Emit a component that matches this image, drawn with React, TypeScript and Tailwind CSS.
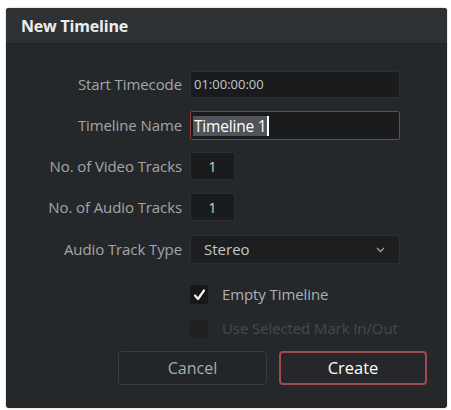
import React from 'react';

const font = { fontFamily: '"Open Sans", "Noto Sans", sans-serif' };

const Row = ({ label, children, className = '' }: { label: string; children: React.ReactNode; className?: string }) => (
  <div className={`flex items-center ${className}`}>
    <div className="w-[177px] pr-[1px] text-right text-[15px] tracking-[-0.1px] text-[#a3a5a8] whitespace-nowrap">{label}</div>
    <div className="ml-[7px] flex items-center">{children}</div>
  </div>
);

const App = () => {
  return (
    <div className="w-[451px] h-[410px] bg-white pt-[8px] pl-[6px]" style={font}>
      <div className="w-[441px] h-[400px] rounded-[3px] bg-[#25282b] overflow-hidden flex flex-col shadow-[0_0_2px_rgba(0,0,0,0.3)]">
        {/* Title bar */}
        <div className="h-[36px] bg-[#2f3235] border-b border-[#1e2023] flex items-center pl-[15px]">
          <span className="text-[16px] font-bold text-[#eceded] tracking-[-0.2px]">New Timeline</span>
        </div>

        {/* Form */}
        <div className="flex flex-col pt-[27px]">
          <Row label="Start Timecode">
            <div className="w-[210px] h-[27px] bg-[#1a1b1d] border border-[#2c2e31] rounded-[2px] flex items-center pl-[3px] text-[13px] text-[#c4c6c8]">
              01:00:00:00
            </div>
          </Row>
          <Row label="Timeline Name" className="mt-[13px]">
            <div className="w-[210px] h-[29px] bg-[#1a1b1d] border border-[#8e3a3e] rounded-[2px] flex items-center pl-[2px] text-[15.5px]">
              <span className="bg-[#505357] text-white px-[1px] leading-[20px] tracking-[-0.2px]">Timeline 1</span>
              <span className="w-[1.5px] h-[20px] bg-white"></span>
            </div>
          </Row>
          <Row label="No. of Video Tracks" className="mt-[12px]">
            <div className="w-[45px] h-[28px] bg-[#1a1b1d] border border-[#2c2e31] rounded-[2px] flex items-center justify-center text-[14px] text-[#d6d8da]">
              1
            </div>
          </Row>
          <Row label="No. of Audio Tracks" className="mt-[13px]">
            <div className="w-[45px] h-[28px] bg-[#1a1b1d] border border-[#2c2e31] rounded-[2px] flex items-center justify-center text-[14px] text-[#d6d8da]">
              1
            </div>
          </Row>
          <Row label="Audio Track Type" className="mt-[14px]">
            <div className="w-[210px] h-[29px] bg-[#1d1e20] border border-[#2c2e31] rounded-[2px] flex items-center justify-between pl-[13px] pr-[14px] text-[15px] text-[#c4c6c8]">
              <span>Stereo</span>
              <svg width="9" height="6" viewBox="0 0 9 6" fill="none">
                <path d="M1 1l3.5 3.5L8 1" stroke="#9a9c9f" strokeWidth="1.3" />
              </svg>
            </div>
          </Row>

          {/* Checkboxes */}
          <div className="flex items-center ml-[184px] mt-[21px]">
            <div className="w-[18px] h-[19px] bg-[#17181a] rounded-[2px] flex items-center justify-center">
              <svg width="13" height="12" viewBox="0 0 13 12" fill="none">
                <path d="M2 6.5l3 3.5L11 1.5" stroke="#f2f2f2" strokeWidth="2.2" strokeLinecap="round" strokeLinejoin="round" />
              </svg>
            </div>
            <span className="ml-[14px] text-[15px] leading-[19px] tracking-[-0.1px] text-[#aeb0b3]">Empty Timeline</span>
          </div>
          <div className="flex items-center ml-[184px] mt-[15px]">
            <div className="w-[18px] h-[18px] bg-[#1f2022] rounded-[2px]"></div>
            <span className="ml-[14px] text-[15px] leading-[19px] tracking-[-0.1px] text-[#45484c]">Use Selected Mark In/Out</span>
          </div>

          {/* Buttons */}
          <div className="flex ml-[112px] mt-[13px] gap-[12px]">
            <button className="w-[149px] h-[34px] rounded-[4px] border border-[#3a3c40] bg-[#232629] text-[16px] text-[#a9abae]">
              Cancel
            </button>
            <button className="w-[148px] h-[34px] rounded-[4px] border-2 border-[#a24a50] bg-[#25272b] text-[16.5px] text-white">
              Create
            </button>
          </div>
        </div>
      </div>
    </div>
  );
};

export default App;
